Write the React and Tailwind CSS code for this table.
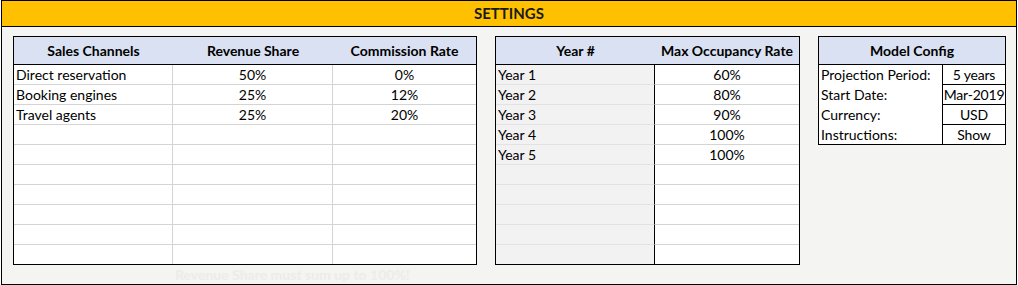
import React from 'react';

const channels = [
  { name: 'Direct reservation', share: '50%', rate: '0%' },
  { name: 'Booking engines', share: '25%', rate: '12%' },
  { name: 'Travel agents', share: '25%', rate: '20%' },
];

const years = [
  { year: 'Year 1', max: '60%' },
  { year: 'Year 2', max: '80%' },
  { year: 'Year 3', max: '90%' },
  { year: 'Year 4', max: '100%' },
  { year: 'Year 5', max: '100%' },
];

const config = [
  { label: 'Projection Period:', value: '5 years' },
  { label: 'Start Date:', value: 'Mar-2019' },
  { label: 'Currency:', value: 'USD' },
  { label: 'Instructions:', value: 'Show' },
];

const ROWS = 10;

function SalesTable() {
  return (
    <div className="flex flex-col">
      <div className="w-[464px] border border-black bg-white">
        <div className="flex h-[28px] border-b border-black bg-[#d9e1f2] font-bold">
          <div className="w-[159px] flex items-center justify-center">Sales Channels</div>
          <div className="w-[160px] flex items-center justify-center">Revenue Share</div>
          <div className="flex-1 flex items-center justify-center">Commission Rate</div>
        </div>
        {Array.from({ length: ROWS }).map((_, i) => {
          const r = channels[i];
          const last = i === ROWS - 1;
          return (
            <div key={i} className={last ? 'flex h-[19px]' : 'flex h-[20px] border-b border-[#d4d4d4]'}>
              <div className="w-[159px] border-r border-[#d4d4d4] pl-[2px] flex items-center">{r && r.name}</div>
              <div className="w-[160px] border-r border-[#d4d4d4] flex items-center justify-center">{r && r.share}</div>
              <div className="flex-1 flex items-center justify-center">{r && r.rate}</div>
            </div>
          );
        })}
      </div>
      <div className="h-[19px] pl-[162px] flex items-center font-bold text-[#ececea]">
        Revenue Share must sum up to 100%!
      </div>
    </div>
  );
}

function YearTable() {
  return (
    <div className="w-[305px] self-start border border-black bg-white">
      <div className="flex h-[28px] border-b border-black bg-[#d9e1f2] font-bold">
        <div className="w-[159px] flex items-center justify-center">Year #</div>
        <div className="flex-1 flex items-center justify-center">Max Occupancy Rate</div>
      </div>
      {Array.from({ length: ROWS }).map((_, i) => {
        const r = years[i];
        const last = i === ROWS - 1;
        return (
          <div key={i} className={last ? 'flex h-[19px]' : 'flex h-[20px]'}>
            <div className={`w-[159px] bg-[#f2f2f2] border-r border-black pl-[2px] flex items-center ${last ? '' : 'border-b border-b-[#e2e2e2]'}`}>
              {r && r.year}
            </div>
            <div className={`flex-1 flex items-center justify-center ${last ? '' : 'border-b border-[#d4d4d4]'}`}>
              {r && r.max}
            </div>
          </div>
        );
      })}
    </div>
  );
}

function ConfigTable() {
  return (
    <div className="w-[188px] self-start border border-black bg-white">
      <div className="flex h-[28px] border-b border-black bg-[#d9e1f2] font-bold items-center justify-center">
        Model Config
      </div>
      {config.map((c, i) => {
        const last = i === config.length - 1;
        return (
          <div key={c.label} className={last ? 'flex h-[19px]' : 'flex h-[20px]'}>
            <div className="w-[124px] border-r border-black pl-[2px] flex items-center whitespace-nowrap">{c.label}</div>
            <div className={`flex-1 flex items-center justify-center whitespace-nowrap tracking-[-0.2px] ${last ? '' : 'border-b border-black'}`}>{c.value}</div>
          </div>
        );
      })}
    </div>
  );
}

export default function App() {
  return (
    <div className="w-[1018px] h-[285px] bg-white text-[14px] leading-none text-black" style={{ fontFamily: 'Lato, "Liberation Sans", sans-serif' }}>
      <div className="ml-px w-[1016px] h-[285px] border border-black bg-[#f4f4f2] flex flex-col">
        <div className="h-[26px] bg-[#ffc000] border-b border-black flex items-center justify-center font-bold text-[15px] text-[#1a1a1a]">
          SETTINGS
        </div>
        <div className="flex gap-[18px] pl-[11px] pt-[9px]">
          <SalesTable />
          <YearTable />
          <ConfigTable />
        </div>
      </div>
    </div>
  );
}
